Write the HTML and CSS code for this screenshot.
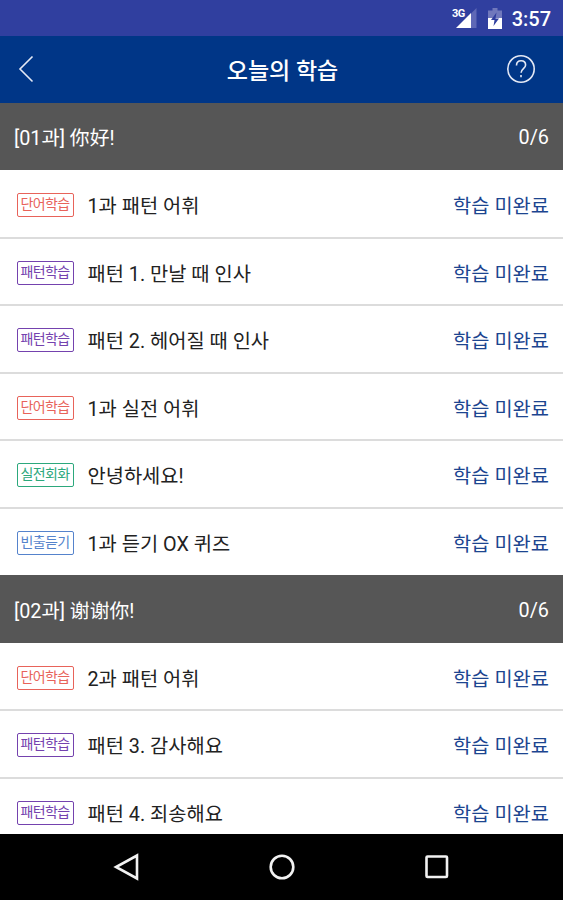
FILE: index.html
```html
<!DOCTYPE html>
<html lang="ko">

<head>
    <meta charset="UTF-8">
    <meta name="viewport" content="width=device-width, initial-scale=1.0">
    <title>오늘의 학습</title>
    <link rel="stylesheet" href="styles.css">
</head>

<body>
    <div class="main">
        <div class="status">
            <svg class="signal" width="26" height="24" viewBox="0 0 26 24">
                <path d="M19 7.500L24.500 2V22H19z" fill="#5f68b6"/>
                <path d="M4 22L19 7V22z" fill="#fff"/>
                <text class="net" x="0" y="11">3G</text>
            </svg>
            <svg class="battery" width="14" height="22" viewBox="0 0 14 22">
                <path d="M4.500 0h5v2.500H14V10H0V2.500h4.500z" fill="#7078bc"/>
                <path d="M0 10h14v11H0z" fill="#fff"/>
                <path d="M8.500 4.500L3 12h3.500l-1 6L11 10.500H7.500z" fill="#303f9f"/>
            </svg>
            <span class="time">3:57</span>
        </div>
        <div class="header">
            <svg class="back" width="16" height="28" viewBox="0 0 16 28">
                <path d="M14.500 1.500L2 14l12.500 12.500"/>
            </svg>
            <h1>오늘의 학습</h1>
            <svg class="help" width="30" height="30" viewBox="0 0 30 30">
                <circle cx="15" cy="15" r="13.200"/>
                <path d="M10.500 11.500c0-3 1.900-4.700 4.600-4.700s4.500 1.700 4.500 4.300c0 3.400-4.500 3.900-4.500 7.700"/>
                <path d="M15 21v2.200"/>
            </svg>
        </div>

        <div class="list">
            <div class="title"><span>[01과] <i lang="zh">你好</i>!</span><span>0/6</span></div>
            <div class="item">
                <span class="tag red">단어학습</span>
                <p>1과 패턴 어휘</p>
                <span class="state">학습 미완료</span>
            </div>
            <div class="item">
                <span class="tag purple">패턴학습</span>
                <p>패턴 1. 만날 때 인사</p>
                <span class="state">학습 미완료</span>
            </div>
            <div class="item">
                <span class="tag purple">패턴학습</span>
                <p>패턴 2. 헤어질 때 인사</p>
                <span class="state">학습 미완료</span>
            </div>
            <div class="item">
                <span class="tag red">단어학습</span>
                <p>1과 실전 어휘</p>
                <span class="state">학습 미완료</span>
            </div>
            <div class="item">
                <span class="tag green">실전회화</span>
                <p>안녕하세요!</p>
                <span class="state">학습 미완료</span>
            </div>
            <div class="item">
                <span class="tag blue">빈출듣기</span>
                <p>1과 듣기 OX 퀴즈</p>
                <span class="state">학습 미완료</span>
            </div>

            <div class="title"><span>[02과] <i lang="zh">谢谢你</i>!</span><span>0/6</span></div>
            <div class="item">
                <span class="tag red">단어학습</span>
                <p>2과 패턴 어휘</p>
                <span class="state">학습 미완료</span>
            </div>
            <div class="item">
                <span class="tag purple">패턴학습</span>
                <p>패턴 3. 감사해요</p>
                <span class="state">학습 미완료</span>
            </div>
            <div class="item">
                <span class="tag purple">패턴학습</span>
                <p>패턴 4. 죄송해요</p>
                <span class="state">학습 미완료</span>
            </div>
        </div>

        <div class="nav">
            <svg width="28" height="28" viewBox="0 0 28 28"><path d="M24 2.500v23L3 14z"/></svg>
            <svg width="28" height="28" viewBox="0 0 28 28"><circle cx="14" cy="14" r="11.300"/></svg>
            <svg width="28" height="28" viewBox="0 0 28 28"><rect x="3.500" y="3.500" width="20.500" height="20.500" rx="1"/></svg>
        </div>
    </div>
</body>

</html>
```
FILE: styles.css
```css
* {
    margin: 0;
    padding: 0;
    box-sizing: border-box;
}

body {
    font-family: Roboto, "Noto Sans CJK KR", sans-serif;
    font-size: 19.8px;
    background: #fff;
}

.main {
    height: 900px;
    display: flex;
    flex-direction: column;
    overflow: hidden;
}

.status {
    height: 36px;
    flex-shrink: 0;
    display: flex;
    align-items: center;
    justify-content: flex-end;
    padding: 0 12px 0 0;
    background: #303f9f;
    color: #fff;
}

.signal {
    margin: 0 10px 0 0;
}

.net {
    font-size: 11px;
    font-weight: 700;
    letter-spacing: -0.5px;
    fill: #fff;
    stroke: #303f9f;
    stroke-width: 0.6px;
    paint-order: stroke;
}

.battery {
    margin: 1px 10px 0 0;
}

.time {
    font-size: 20px;
    font-weight: 500;
    line-height: 36px;
    padding-top: 2px;
}

.header {
    height: 66.5px;
    flex-shrink: 0;
    display: flex;
    align-items: center;
    justify-content: space-between;
    padding: 0 27px 0 18px;
    background: #003687;
    color: #fff;
}

.header h1 {
    font-size: 23px;
    font-weight: 500;
    line-height: 60px;
    padding: 5px 0 0 25px;
}

.back,
.help {
    fill: none;
    stroke: #e4e9f5;
    stroke-width: 1.6;
}

.list {
    flex: 1;
    min-height: 0;
    overflow: hidden;
}

.title,
.item {
    height: 67.5px;
    display: flex;
    align-items: center;
    line-height: 30px;
    padding-right: 14px;
}

.title {
    justify-content: space-between;
    padding-left: 14px;
    padding-top: 4px;
    background: #565656;
    color: #fff;
}

.title i {
    font-style: normal;
    font-family: "Noto Sans CJK SC", sans-serif;
}

.item {
    padding-left: 16.5px;
    padding-top: 3px;
    color: #222;
}

.item + .item {
    height: 68.5px;
    margin-top: -1px;
    border-top: 2px solid #dcdcdc;
    padding-top: 1.5px;
}

.item p {
    flex: 1;
    margin-left: 14px;
    padding-top: 4px;
}

.state {
    color: #1c4590;
    padding-top: 4px;
}

.tag {
    width: 57px;
    height: 24px;
    border: 1.5px solid;
    border-radius: 2px;
    font-size: 14px;
    line-height: 20px;
    letter-spacing: -0.6px;
    text-align: center;
    white-space: nowrap;
}

.red {
    color: #e8635a;
}

.purple {
    color: #7442ae;
}

.green {
    color: #2ca87c;
}

.blue {
    color: #5583cc;
}

.nav {
    height: 66.5px;
    flex-shrink: 0;
    display: flex;
    align-items: center;
    justify-content: center;
    gap: 127px;
    background: #000;
}

.nav svg {
    fill: none;
    stroke: #f2f2f2;
    stroke-width: 2.6;
}
```
